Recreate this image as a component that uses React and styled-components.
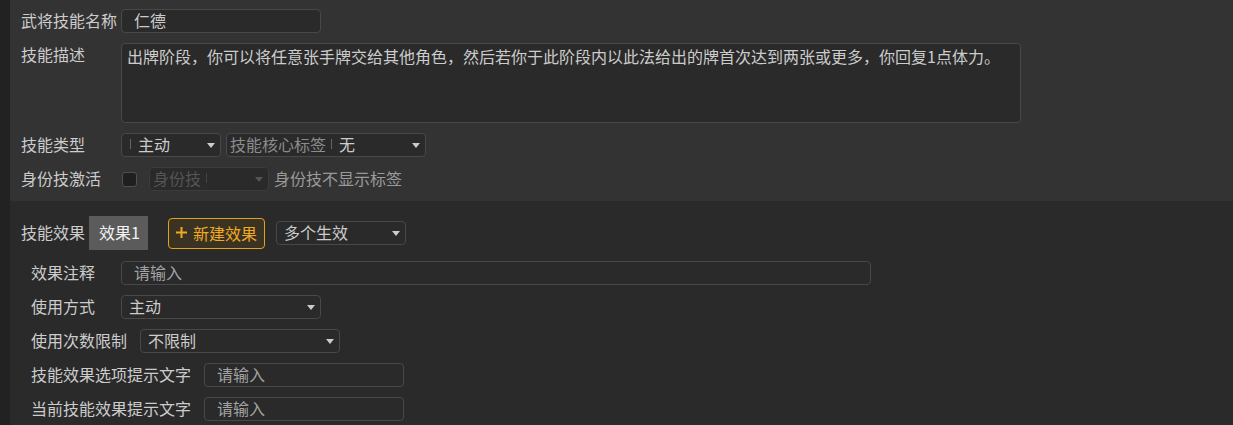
import React from "react";
import styled, { createGlobalStyle } from "styled-components";

const GlobalStyle = createGlobalStyle`
  body {
    margin: 0;
    background: #2a2a2a;
    font-family: "Noto Sans CJK SC", "Noto Sans", sans-serif;
    font-size: 16px;
    color: #cccccc;
  }
`;

const Page = styled.div`
  display: flex;
  min-height: 100vh;
`;

const SideStrip = styled.div`
  width: 10px;
  flex-shrink: 0;
  background: #222222;
`;

const Main = styled.div`
  flex: 1;
  display: flex;
  flex-direction: column;
`;

const TopPanel = styled.section`
  background: #333333;
  padding: 9px 11px 10px;
  display: flex;
  flex-direction: column;
  gap: 10px;
`;

const BottomPanel = styled.section`
  flex: 1;
  background: #2a2a2a;
  padding: 15px 11px 0;
`;

const Row = styled.div`
  display: flex;
  align-items: ${(props) => (props.$top ? "flex-start" : "center")};
`;

const Label = styled.span`
  width: 100px;
  flex-shrink: 0;
  line-height: 22px;
  padding-bottom: 2px;
  color: #cccccc;
  white-space: nowrap;
`;

const TextInput = styled.input`
  width: ${(props) => props.$w}px;
  height: 24px;
  box-sizing: border-box;
  background: #2a2a2a;
  border: 1px solid #484848;
  border-radius: 4px;
  padding: 0 12px 2px;
  color: #cccccc;
  font: inherit;
  line-height: 20px;
  outline: none;
  &::placeholder {
    color: #a3a3a3;
  }
`;

const DescBox = styled.textarea`
  width: 900px;
  height: 80px;
  box-sizing: border-box;
  background: #2a2a2a;
  border: 1px solid #484848;
  border-radius: 4px;
  padding: 1px 5px;
  color: #cccccc;
  font: inherit;
  line-height: 22px;
  resize: none;
  outline: none;
  overflow: hidden;
`;

const SelectBox = styled.div`
  width: ${(props) => props.$w}px;
  height: 24px;
  box-sizing: border-box;
  flex-shrink: 0;
  display: flex;
  align-items: center;
  background: #2a2a2a;
  border: 1px solid ${(props) => (props.$disabled ? "#3b3b3b" : "#484848")};
  border-radius: 4px;
  padding: 0 5px 2px 0;
  margin-left: ${(props) => props.$ml || 0}px;
  line-height: 20px;
`;

const SelectPrefix = styled.span`
  padding: 0 5px 0 3px;
  color: ${(props) => (props.$disabled ? "#555555" : "#8c8c8c")};
  white-space: nowrap;
`;

const Divider = styled.span`
  width: 1px;
  height: 10px;
  background: ${(props) => (props.$disabled ? "#444444" : "#666666")};
`;

const SelectValue = styled.span`
  flex: 1;
  padding-left: 7px;
  color: #cccccc;
  white-space: nowrap;
`;

const Arrow = styled.span`
  width: 0;
  height: 0;
  margin-top: 2px;
  border-left: 4px solid transparent;
  border-right: 4px solid transparent;
  border-top: 5px solid ${(props) => (props.$disabled ? "#555555" : "#cccccc")};
`;

const Checkbox = styled.span`
  width: 15px;
  height: 15px;
  margin-left: 1px;
  box-sizing: border-box;
  background: #1f1f1f;
  border: 1px solid #505050;
  border-radius: 3px;
  flex-shrink: 0;
`;

const Hint = styled.span`
  margin-left: 5px;
  color: #9a9a9a;
  line-height: 22px;
  padding-bottom: 2px;
`;

const HeaderLabel = styled.span`
  line-height: 22px;
  padding-bottom: 2px;
  color: #cccccc;
  margin-right: 4px;
`;

const Tab = styled.div`
  height: 34px;
  box-sizing: border-box;
  padding: 0 8px 2px 10px;
  background: #5b5b5b;
  color: #f2f2f2;
  line-height: 32px;
`;

const AddButton = styled.button`
  margin-left: 20px;
  width: 97px;
  height: 31px;
  box-sizing: border-box;
  display: flex;
  align-items: center;
  gap: 5px;
  padding: 0 0 1px 6px;
  background: #3a3323;
  border: 1px solid #e4a11b;
  border-radius: 4px;
  color: #f2a81f;
  font: inherit;
  line-height: 22px;
  cursor: pointer;
`;

const FieldList = styled.div`
  margin-top: 11px;
  padding-left: 10px;
  display: flex;
  flex-direction: column;
  gap: 10px;
`;

const FieldLabel = styled.span`
  min-width: 90px;
  padding: 0 13px 2px 0;
  box-sizing: border-box;
  line-height: 22px;
  color: #cccccc;
  white-space: nowrap;
`;

const Select = ({ w, ml, prefix, value, disabled }) => (
  <SelectBox $w={w} $ml={ml} $disabled={disabled}>
    {prefix !== undefined && (
      <>
        <SelectPrefix $disabled={disabled}>{prefix}</SelectPrefix>
        <Divider $disabled={disabled} />
      </>
    )}
    <SelectValue>{value}</SelectValue>
    <Arrow $disabled={disabled} />
  </SelectBox>
);

const PlusIcon = () => (
  <svg width="13" height="13" viewBox="0 0 13 13">
    <path d="M6.5 1v11M1 6.5h11" stroke="#f2a81f" strokeWidth="2" />
  </svg>
);

const fields = [
  { label: "效果注释", kind: "input", w: 750, placeholder: "请输入" },
  { label: "使用方式", kind: "select", w: 200, value: "主动" },
  { label: "使用次数限制", kind: "select", w: 200, value: "不限制" },
  { label: "技能效果选项提示文字", kind: "input", w: 200, placeholder: "请输入" },
  { label: "当前技能效果提示文字", kind: "input", w: 200, placeholder: "请输入" },
];

export default function App() {
  return (
    <Page>
      <GlobalStyle />
      <SideStrip />
      <Main>
        <TopPanel>
          <Row>
            <Label>武将技能名称</Label>
            <TextInput $w={200} defaultValue="仁德" />
          </Row>
          <Row $top>
            <Label>技能描述</Label>
            <DescBox
              readOnly
              value="出牌阶段，你可以将任意张手牌交给其他角色，然后若你于此阶段内以此法给出的牌首次达到两张或更多，你回复1点体力。"
            />
          </Row>
          <Row>
            <Label>技能类型</Label>
            <Select w={100} prefix="" value="主动" />
            <Select w={200} ml={5} prefix="技能核心标签" value="无" />
          </Row>
          <Row>
            <Label>身份技激活</Label>
            <Checkbox />
            <Select w={120} ml={12} prefix="身份技" value="" disabled />
            <Hint>身份技不显示标签</Hint>
          </Row>
        </TopPanel>
        <BottomPanel>
          <Row>
            <HeaderLabel>技能效果</HeaderLabel>
            <Tab>效果1</Tab>
            <AddButton>
              <PlusIcon />
              新建效果
            </AddButton>
            <Select w={130} ml={11} value="多个生效" />
          </Row>
          <FieldList>
            {fields.map((f) => (
              <Row key={f.label}>
                <FieldLabel>{f.label}</FieldLabel>
                {f.kind === "input" ? (
                  <TextInput $w={f.w} placeholder={f.placeholder} />
                ) : (
                  <Select w={f.w} value={f.value} />
                )}
              </Row>
            ))}
          </FieldList>
        </BottomPanel>
      </Main>
    </Page>
  );
}
